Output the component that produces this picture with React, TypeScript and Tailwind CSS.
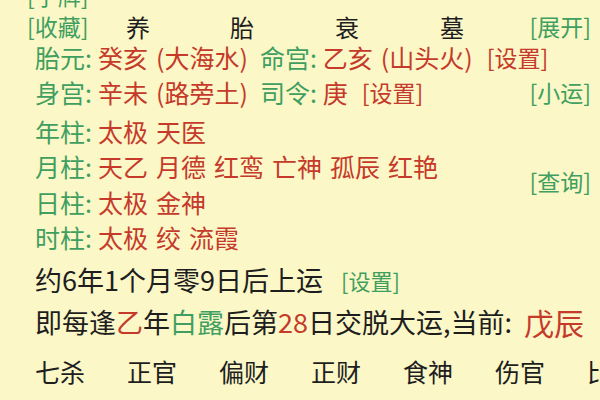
import React from "react";

const G = "text-[#3f9f60]";
const R = "text-[#c53a2a]";
const K = "text-[#1e1e1e]";
const B = "text-[23px]";

export default function App() {
  const tenGods = ["七杀", "正官", "偏财", "正财", "食神", "伤官", "比肩"];
  const bottom = [
    { t: "辛亥", c: K },
    { t: "壬午", c: K },
    { t: "丁巳", c: K },
    { t: "戊辰", c: R },
    { t: "癸卯", c: K },
    { t: "甲午", c: K },
    { t: "乙未", c: K },
  ];
  const pillars = [
    { label: "年柱:", words: ["太极", "天医"], h: "h-[38px]" },
    { label: "月柱:", words: ["天乙", "月德", "红鸾", "亡神", "孤辰", "红艳"], h: "h-[32px]" },
    { label: "日柱:", words: ["太极", "金神"], h: "h-[40px]" },
    { label: "时柱:", words: ["太极", "绞", "流霞"], h: "h-[30px]" },
  ];
  return (
    <div
      className="w-[600px] h-[400px] overflow-hidden bg-[#fbf7c7] text-[25px] leading-[1.1] whitespace-nowrap"
      style={{ fontFamily: '"Noto Sans CJK SC", "Noto Sans", sans-serif' }}
    >
      <div className="flex flex-col mt-[-19px]">
        {/* cut top row */}
        <div className={`h-[30px] flex items-center pl-[27px] ${B} ${G}`}>[字牌]</div>
        {/* header */}
        <div className="h-[32px] flex items-center pl-[27px] pr-[9px] text-[24px]">
          <span className={`w-[99px] shrink-0 ${B} ${G}`}>[收藏]</span>
          <span className={`w-[104px] shrink-0 ${K}`}>养</span>
          <span className={`w-[105px] shrink-0 ${K}`}>胎</span>
          <span className={`w-[105px] shrink-0 ${K}`}>衰</span>
          <span className={`shrink-0 ${K}`}>墓</span>
          <span className={`${G} ${B} ml-auto shrink-0`}>[展开]</span>
        </div>
        {/* 胎元 */}
        <div className="h-[30px] flex items-center pl-[35px]">
          <span className={G}>胎元:</span>
          <span className={`${R} ml-[6px]`}>癸亥</span>
          <span className={`${R} ml-[8px]`}>(大海水)</span>
          <span className={`${G} ml-[12px]`}>命宫:</span>
          <span className={`${R} ml-[6px]`}>乙亥</span>
          <span className={`${R} ml-[8px]`}>(山头火)</span>
          <span className={`${R} ${B} ml-[14px]`}>[设置]</span>
        </div>
        {/* 身宫 */}
        <div className="h-[40px] flex items-center pl-[35px] pr-[9px]">
          <span className={G}>身宫:</span>
          <span className={`${R} ml-[6px]`}>辛未</span>
          <span className={`${R} ml-[8px]`}>(路旁土)</span>
          <span className={`${G} ml-[12px]`}>司令:</span>
          <span className={`${R} ml-[6px]`}>庚</span>
          <span className={`${R} ${B} ml-[14px]`}>[设置]</span>
          <span className={`${G} ${B} ml-auto`}>[小运]</span>
        </div>
        {/* pillars */}
        <div className="flex pr-[9px]">
          <div className="flex flex-col pl-[35px]">
            {pillars.map((p) => (
              <div key={p.label} className={`${p.h} flex items-center gap-[8px]`}>
                <span className={`${G} mr-[-2px]`}>{p.label}</span>
                {p.words.map((w, i) => (
                  <span key={i} className={R}>
                    {w}
                  </span>
                ))}
              </div>
            ))}
          </div>
          <div className={`ml-auto pt-[56px] ${B} ${G}`}>[查询]</div>
        </div>
        {/* 上运 */}
        <div className="h-[54px] flex items-center pl-[35px] text-[27px]">
          <span className={K}>约6年1个月零9日后上运</span>
          <span className={`${G} text-[22px] ml-[18px]`}>[设置]</span>
        </div>
        {/* 交脱 */}
        <div className="h-[30px] flex items-center pl-[35px] whitespace-pre text-[27px]">
          <span className={K}>即每逢</span>
          <span className={R}>乙</span>
          <span className={K}>年</span>
          <span className={G}>白露</span>
          <span className={K}>后第</span>
          <span className={R}>28</span>
          <span className={K}>日交脱大运,当前:  </span>
          <span className={`${R} text-[30px]`}>戊辰</span>
        </div>
        {/* ten gods */}
        <div className="h-[70px] flex items-center pl-[35px]">
          {tenGods.map((g) => (
            <span key={g} className={`w-[92px] shrink-0 ${K}`}>
              {g}
            </span>
          ))}
        </div>
        <div className="h-[30px] flex items-center pl-[35px]">
          {bottom.map((b, i) => (
            <span key={i} className={`w-[92px] shrink-0 text-[25px] ${b.c}`}>
              {b.t}
            </span>
          ))}
        </div>
      </div>
    </div>
  );
}
